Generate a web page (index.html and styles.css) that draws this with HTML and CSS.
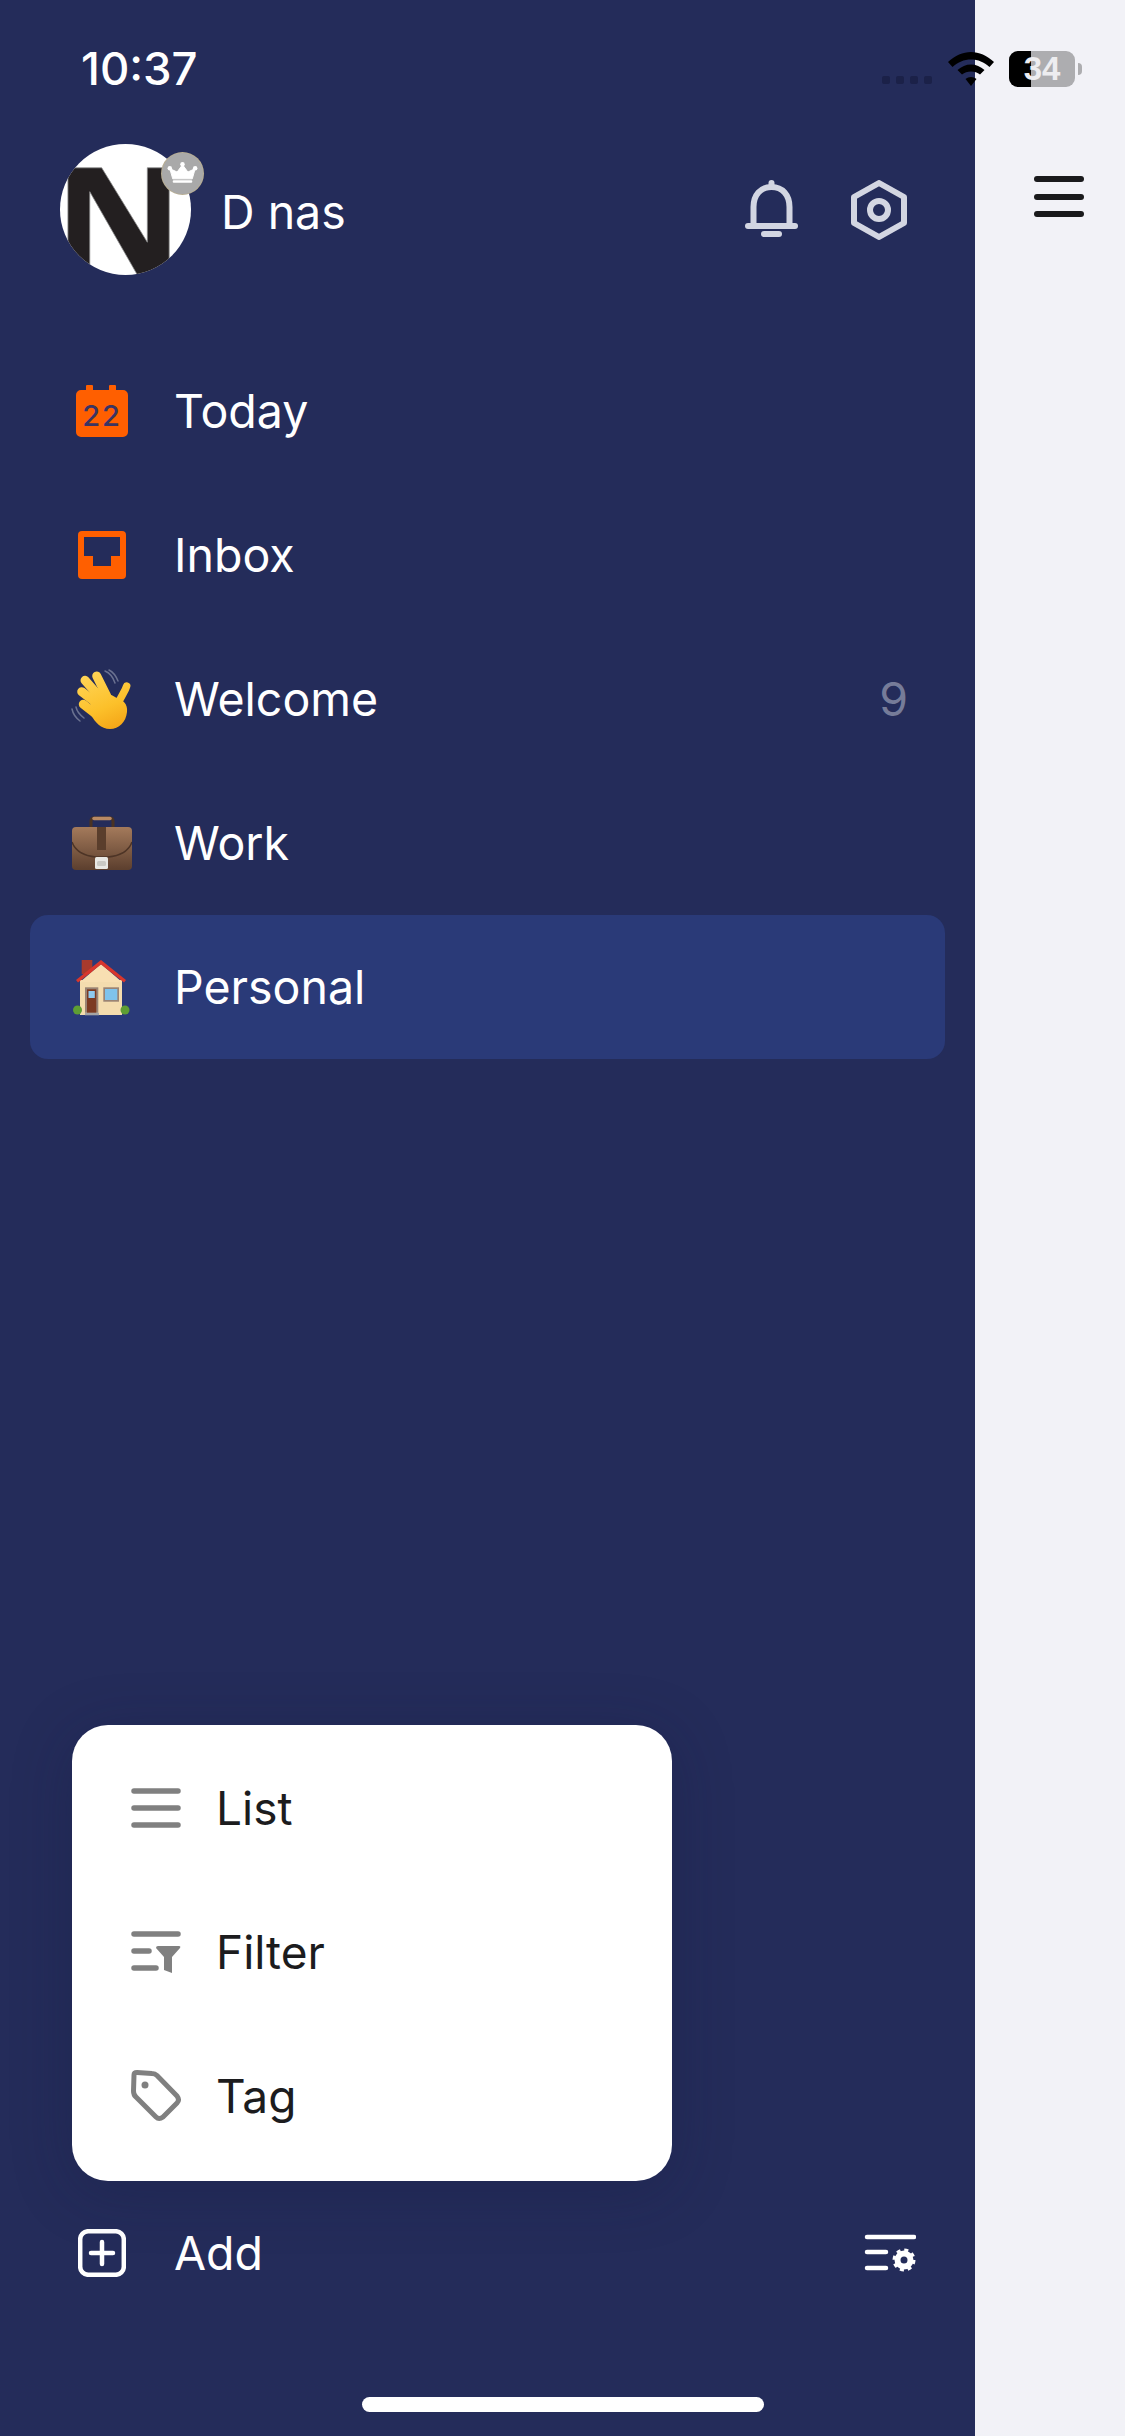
FILE: index.html
```html
<!DOCTYPE html>
<html lang="en">
<head>
<meta charset="utf-8">
<title>Lists</title>
<link rel="stylesheet" href="styles.css">
</head>
<body>
<div class="app">
  <aside class="sidebar">
    <div class="status-time">10:37</div>
    <header class="profile">
      <div class="avatar">
        <div class="avatar-clip">
          <svg viewBox="0 0 132 132" width="131" height="131">
            <rect width="132" height="132" fill="#fff"/>
            <path d="M8 24H42L88 99V24H110V132H78L30 48V132H8Z" fill="#231f20" stroke="#8b8b8b" stroke-width="0.800"/>
          </svg>
        </div>
        <div class="crown">
          <svg viewBox="0 0 42 42" width="42" height="42">
            <path d="M21 12 L26.500 19.500 L34 16 L31 26.500 H11 L8 16 L15.500 19.500Z" fill="#fff" stroke="#fff" stroke-linejoin="round"/>
            <circle cx="21" cy="11.500" r="2.300" fill="#fff"/><circle cx="8" cy="15.500" r="2.300" fill="#fff"/><circle cx="34" cy="15.500" r="2.300" fill="#fff"/>
            <rect x="11" y="28" width="20" height="2.500" rx="1" fill="#fff"/>
          </svg>
        </div>
      </div>
      <div class="profile-name">D nas</div>
      <div class="profile-actions">
        <svg viewBox="0 0 54 60" width="54" height="60" fill="none" stroke="#d3d6e2" stroke-width="6" stroke-linecap="round" stroke-linejoin="round">
          <path d="M8.500 46V27C8.500 15 15.500 7 26.500 7S44.500 15 44.500 27V46"/>
          <path d="M3 46H50"/><path d="M19 54H34"/><path d="M26.500 3V5"/>
        </svg>
        <svg viewBox="0 0 56 60" width="56" height="60" fill="none" stroke="#d3d6e2" stroke-width="6" stroke-linejoin="round">
          <path d="M28 3 L53 17 V43 L28 57 L3 43 V17Z"/>
          <circle cx="28" cy="30" r="9"/>
        </svg>
      </div>
    </header>
    <nav class="nav">
      <div class="row">
        <span class="row-icon">
          <svg viewBox="0 0 52 52" width="52" height="52">
            <path d="M5 5H10V1Q10 0 11 0H16Q17 0 17 1V5H33V1Q33 0 34 0H39Q40 0 40 1V5H47A5 5 0 0 1 52 10V47A5 5 0 0 1 47 52H5A5 5 0 0 1 0 47V10A5 5 0 0 1 5 5Z" fill="#ff5f00"/>
            <text x="26" y="41" class="cal-num">22</text>
          </svg>
        </span>
        <span class="row-label">Today</span>
      </div>
      <div class="row">
        <span class="row-icon">
          <svg viewBox="0 0 48 48" width="48" height="48">
            <rect width="48" height="48" rx="4" fill="#ff5f00"/>
            <path d="M6 6H42V25H33V35H15V25H6Z" fill="#242c5a"/>
          </svg>
        </span>
        <span class="row-label">Inbox</span>
      </div>
      <div class="row">
        <span class="row-icon">
          <svg viewBox="0 0 62 62" width="62" height="62">
            <defs>
              <linearGradient id="hand" gradientUnits="userSpaceOnUse" x1="20" y1="5" x2="45" y2="62">
                <stop offset="0" stop-color="#ffd455"/>
                <stop offset="0.600" stop-color="#fcc02a"/>
                <stop offset="1" stop-color="#f4a416"/>
              </linearGradient>
            </defs>
            <g fill="none" stroke="#6a7190" stroke-width="1.500" stroke-linecap="round">
              <path d="M1 41C2 46 5 50 9 53"/>
              <path d="M5 39C6 44 9 47 13 50"/>
              <path d="M34 3C39 5 42 9 44 15"/>
              <path d="M38 2C42 4 45 8 47 13"/>
            </g>
            <g fill="none" stroke="url(#hand)" stroke-width="9" stroke-linecap="round">
              <path d="M25.700 8L35.700 28"/>
              <path d="M14 12.300L30.700 31.300"/>
              <path d="M10.700 23.700L27.300 36.300"/>
              <path d="M12.300 36.300L27.300 48"/>
              <path d="M55.700 18C54 24 50 28 47 36" stroke-width="7.500"/>
            </g>
            <path d="M28 24C37 24 42 28 46 30C52 32 57 36 56 44C55 54 48 61 39 61C30 61 24 54 20 47C17 42 20 28 28 24Z" fill="url(#hand)"/>
          </svg>
        </span>
        <span class="row-label">Welcome</span>
        <span class="row-count">9</span>
      </div>
      <div class="row">
        <span class="row-icon">
          <svg viewBox="0 0 60 54" width="60" height="54">
            <defs>
              <linearGradient id="case" x1="0" y1="0" x2="0" y2="1">
                <stop offset="0" stop-color="#a47a5b"/>
                <stop offset="1" stop-color="#5c3f2e"/>
              </linearGradient>
            </defs>
            <path d="M19 11V5Q19 2 22 2H38Q41 2 41 5V11" fill="none" stroke="#4a3323" stroke-width="3"/>
            <path d="M22 2.500H38" stroke="#b98a64" stroke-width="3.500" stroke-linecap="round"/>
            <rect x="0" y="11" width="60" height="43" rx="4" fill="url(#case)"/>
            <path d="M0 26C4 37 14 40 24 41H36C46 40 56 37 60 26" fill="none" stroke="#4d3426" stroke-width="1.500"/>
            <rect x="25" y="11" width="9" height="23" fill="#5a3e2c"/>
            <rect x="23" y="41" width="13" height="12" rx="1.500" fill="#e8e8e4"/>
            <rect x="25" y="45" width="9" height="5" rx="1.500" fill="#c9c9c4"/>
          </svg>
        </span>
        <span class="row-label">Work</span>
      </div>
      <div class="row row-active">
        <span class="row-icon">
          <svg viewBox="0 0 58 58" width="58" height="58">
            <rect x="8.700" y="2" width="10.600" height="14" fill="#a83a2c"/>
            <rect x="7" y="22" width="42" height="35" fill="#f4dcae"/>
            <path d="M28 6L49 24H7Z" fill="#f8dfb2"/>
            <path d="M28 2L53 22 51 24.500 28 6.500 5 24.500 3 22Z" fill="#d8362c"/>
            <rect x="12" y="29.300" width="13.300" height="25.500" fill="#9a8474"/>
            <rect x="14" y="31.300" width="9.300" height="23.500" fill="#7c3a22"/>
            <rect x="15.500" y="33" width="6.300" height="7" fill="#8ec9ee"/>
            <rect x="30.300" y="29.300" width="15.700" height="14.400" fill="#9a8474"/>
            <rect x="32" y="31" width="12.300" height="11" fill="#7fc3ec"/>
            <rect x="12" y="54.800" width="14" height="2.500" fill="#a5a5a5"/>
            <circle cx="4.500" cy="52" r="4.500" fill="#5e9e33"/>
            <circle cx="52" cy="52" r="4.500" fill="#5e9e33"/>
          </svg>
        </span>
        <span class="row-label">Personal</span>
      </div>
    </nav>
    <footer class="footer">
      <div class="row footer-row">
        <span class="row-icon">
          <svg viewBox="0 0 48 48" width="48" height="48" fill="none" stroke="#fff" stroke-width="4.500" stroke-linecap="round">
            <rect x="2.200" y="2.200" width="43.600" height="43.600" rx="8"/>
            <path d="M24 13V35M13 24H35"/>
          </svg>
        </span>
        <span class="row-label">Add</span>
        <svg class="row-end" viewBox="0 0 52 38" width="52" height="38" fill="none" stroke="#fff" stroke-width="4.500" stroke-linecap="round">
          <path d="M3 3H50M3 18H22M3 34H22"/>
          <circle cx="40" cy="26" r="6.500" stroke-width="6"/>
          <circle cx="40" cy="26" r="10" stroke-width="3" stroke-linecap="butt" stroke-dasharray="4 3.850"/>
        </svg>
      </div>
    </footer>
    <div class="menu">
      <div class="menu-item">
        <svg viewBox="0 0 50 40" width="50" height="40" fill="none" stroke="#808080" stroke-width="5.500" stroke-linecap="round">
          <path d="M3 3H47M3 20H47M3 37H47"/>
        </svg>
        <span>List</span>
      </div>
      <div class="menu-item">
        <svg viewBox="0 0 50 42" width="50" height="42" fill="none" stroke="#808080" stroke-width="5.500" stroke-linecap="round">
          <path d="M3 3H47M3 20H18M3 37H25"/>
          <path d="M27 15H48Q50 15 49 17L41 26V42L33 39V26L25 17Q25 15 27 15Z" fill="#808080" stroke="none"/>
        </svg>
        <span>Filter</span>
      </div>
      <div class="menu-item">
        <svg viewBox="0 0 52 52" width="52" height="52" fill="none" stroke="#808080" stroke-width="5" stroke-linejoin="round">
          <path d="M4 5Q4 2.500 7 2.500L22 3.500Q25 3.500 27 5.500L47 26Q50 30 47 33L33 47Q29 50 26 47L6 27Q3.500 25 3.500 21Z"/>
          <circle cx="15" cy="15" r="3.500" fill="#808080" stroke="none"/>
        </svg>
        <span>Tag</span>
      </div>
    </div>
  </aside>
  <main class="main">
    <div class="hamburger"><span></span><span></span><span></span></div>
  </main>
  <div class="status-right">
    <div class="signal"><span></span><span></span><span></span><span></span></div>
    <svg viewBox="0 0 46 34" width="46" height="34">
      <path d="M23 0C31 0 39 3.500 46 10L41.500 15C36 10 30 7.500 23 7.500S10 10 4.500 15L0 10C7 3.500 15 0 23 0Z" fill="#000"/>
      <path d="M23 12.500C28 12.500 32.500 14.500 36.500 18L32 22.500C29.500 20.500 26.500 19.500 23 19.500S16.500 20.500 14 22.500L9.500 18C13.500 14.500 18 12.500 23 12.500Z" fill="#000"/>
      <path d="M23 25C25 25 27 25.800 28.500 27L23 34 17.500 27C19 25.800 21 25 23 25Z" fill="#000"/>
    </svg>
    <div class="battery">
      <div class="battery-body"><div class="battery-fill"></div><span class="battery-num">34</span></div>
      <div class="battery-cap"></div>
    </div>
  </div>
  <div class="home-indicator"></div>
</div>
</body>
</html>
```
FILE: styles.css
```css
* { box-sizing: border-box; }
html, body { margin: 0; padding: 0; }
body {
  width: 1125px;
  height: 2436px;
  overflow: hidden;
  font-family: Inter, "Liberation Sans", sans-serif;
  background: #f2f2f7;
}
.app { position: relative; display: flex; width: 1125px; height: 2436px; }
.sidebar {
  position: relative;
  width: 975px;
  flex: none;
  display: flex;
  flex-direction: column;
  background: #242c5a;
  color: #fff;
}
.main { flex: 1; padding: 176px 0 0 59px; }
.hamburger { display: flex; flex-direction: column; gap: 11.5px; width: 50px; }
.hamburger span { display: block; height: 6px; border-radius: 3px; background: #1a1a1c; }

.status-time {
  height: 136px;
  padding: 45px 0 0 81px;
  font-size: 45.5px;
  line-height: 48px;
  font-weight: 500;
}
.profile { display: flex; align-items: center; height: 148px; padding: 0 60px; }
.avatar { position: relative; width: 132px; height: 132px; flex: none; }
.avatar-clip { width: 131px; height: 131px; border-radius: 50%; overflow: hidden; }
.avatar-clip svg { display: block; }
.crown {
  position: absolute;
  left: 102px;
  top: 9px;
  width: 41px;
  height: 41px;
  border-radius: 50%;
  background: #a9a9a9;
  box-shadow: 0 0 0 1px #b8ae94;
}
.crown svg { display: block; width: 41px; height: 41px; }
.profile-name { margin-left: 29px; font-size: 46.5px; line-height: 54px; padding-top: 4px; }
.profile-actions { margin-left: auto; display: flex; align-items: center; gap: 52px; margin-right: 8px; }
.profile-actions svg { display: block; }

.nav { display: flex; flex-direction: column; padding: 55px 30px 0; }
.row { display: flex; align-items: center; height: 144px; padding: 0 37px 0 0; }
.row-active { background: #2a3a78; border-radius: 18px; }
.row-icon { width: 72px; margin-left: 36px; display: flex; align-items: center; justify-content: center; flex: none; }
.row-icon svg { display: block; }
.row-label { margin-left: 36px; font-size: 46.5px; line-height: 54px; }
.row-count { margin-left: auto; font-size: 46.5px; line-height: 54px; color: #767c99; }
.cal-num { font-family: Inter, sans-serif; font-size: 29px; font-weight: 500; letter-spacing: 2px; text-anchor: middle; fill: #3a3463; }

.footer { margin-top: auto; display: flex; flex-direction: column; padding: 0 30px 111px; }
.footer-row { padding-right: 0; }
.row-end { margin-left: auto; margin-right: 29px; display: block; }
.home-indicator {
  position: absolute;
  left: 362px;
  top: 2397px;
  width: 402px;
  height: 15px;
  border-radius: 8px;
  background: #fff;
}
.menu {
  position: absolute;
  left: 72px;
  top: 1725px;
  width: 600px;
  height: 456px;
  padding: 11px 0 13px;
  background: #fff;
  border-radius: 36px;
  color: #1c1c1e;
  box-shadow: 0 10px 60px rgba(20, 26, 60, 0.28);
}
.menu-item { display: flex; align-items: center; height: 144px; padding-left: 58px; font-size: 46px; }
.menu-item svg { flex: none; display: block; width: 52px; }
.menu-item span { margin-left: 34px; }

.status-right {
  position: absolute;
  top: 52px;
  left: 882px;
  display: flex;
  align-items: flex-start;
}
.signal { display: flex; gap: 6px; margin-top: 24px; }
.signal span { width: 8px; height: 8px; border-radius: 2px; background: #1b2148; }
.status-right > svg { margin-left: 16px; display: block; }
.battery { display: flex; align-items: center; margin-left: 15px; margin-top: -1px; }
.battery-body {
  position: relative;
  width: 66px;
  height: 36px;
  border-radius: 9px;
  overflow: hidden;
  background: #adadb0;
  text-align: center;
}
.battery-fill { position: absolute; left: 0; top: 0; bottom: 0; width: 22px; background: #000; }
.battery-num { position: relative; font-family: "Liberation Sans", sans-serif; font-weight: 700; font-size: 33px; line-height: 36px; color: #ededf0; }
.battery-cap { width: 4px; height: 12px; margin-left: 3px; border-radius: 0 4px 4px 0; background: #adadb0; }
```
